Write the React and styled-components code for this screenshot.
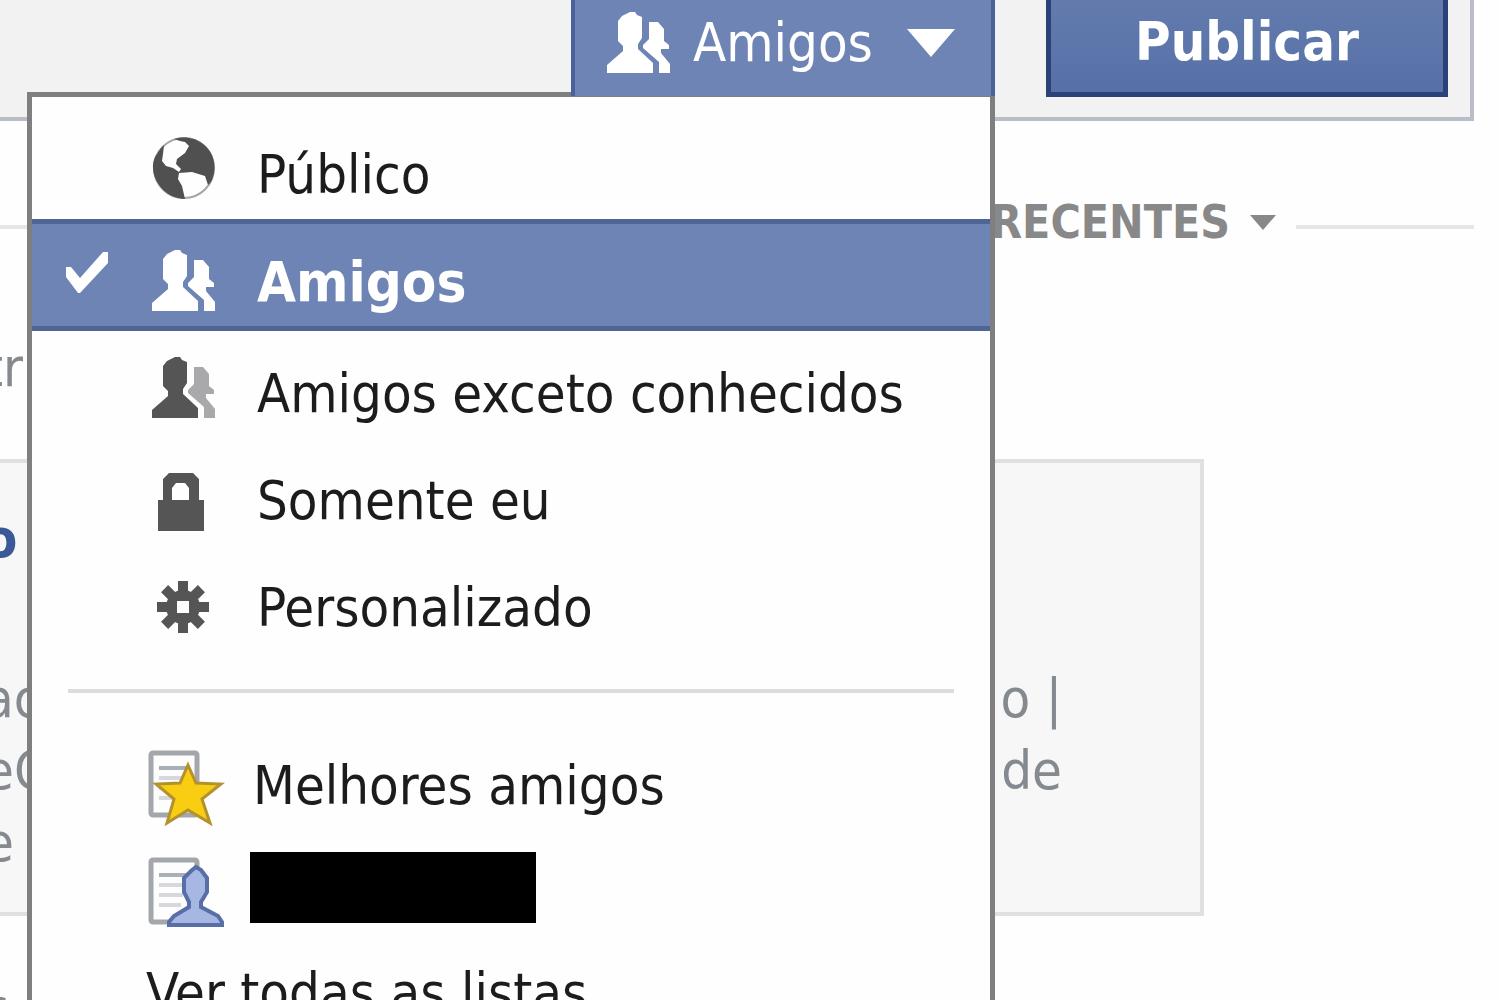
import React, { useState } from 'react';
import styled, { createGlobalStyle, css } from 'styled-components';

const GlobalStyle = createGlobalStyle`
  * {
    box-sizing: border-box;
  }

  body {
    margin: 0;
    background: #fefefe;
    overflow: hidden;
  }

  button {
    margin: 0;
    padding: 0;
    border: none;
    background: none;
    color: inherit;
    font: inherit;
    text-align: left;
    cursor: pointer;
  }
`;

const Page = styled.div`
  height: 100vh;
  overflow: hidden;
  color: #1c1c1c;
  font-family: 'DejaVu Sans Condensed', 'DejaVu Sans', Tahoma, sans-serif;
  font-stretch: condensed;
  font-size: 54px;
  line-height: 72px;
`;

const Composer = styled.div`
  display: flex;
  justify-content: flex-end;
  align-items: flex-start;
  gap: 51px;
  margin-right: 26px;
  padding: 0 22px 20px 0;
  background: #f2f2f2;
  border: solid #b9bdc8;
  border-width: 0 4px 4px 0;
`;

const Audience = styled.div`
  position: relative;
`;

const AudienceButton = styled.button`
  position: relative;
  z-index: 2;
  display: flex;
  align-items: center;
  width: 424px;
  height: 96px;
  padding: 0 36px 10px 32px;
  background: #6d84b4;
  border: solid #4a629b;
  border-width: 0 4px;
  color: #fff;

  span {
    flex: 1;
    padding-left: 22px;
  }
`;

const PublishButton = styled.button`
  width: 402px;
  height: 97px;
  padding-bottom: 8px;
  background: linear-gradient(#637bad, #5670a8);
  border: solid #2b4278;
  border-width: 0 5px 5px;
  color: #fff;
  font-weight: bold;
  text-align: center;
`;

const Menu = styled.div`
  position: absolute;
  top: 92px;
  right: 0;
  z-index: 1;
  width: 968px;
  padding-top: 15px;
  background: #fefefe;
  border: 5px solid #7f7f7f;
`;

const MenuItem = styled.button`
  display: grid;
  grid-template-columns: 120px 105px 1fr;
  align-items: center;
  width: 100%;
  height: 107px;
  padding-top: 7px;

  ${props => props.$selected && css`
    height: 112px;
    padding-top: 12px;
    background: #6d84b4;
    box-shadow: inset 0 5px #4f6593, inset 0 -5px #4f6593;
    color: #fff;
    font-size: 56px;
    font-weight: bold;
  `}
`;

const ListItem = styled(MenuItem)`
  grid-template-columns: 115px 103px 1fr;

  svg {
    margin-top: 16px;
  }
`;

const Label = styled.span`
  grid-column: 3;
  padding-top: ${props => (props.$selected ? '2px' : '12px')};
`;

const ListLabel = styled(Label)`
  padding-left: 3px;
`;

const Check = styled.svg`
  margin: 0 0 18px 32px;
`;

const Icon = styled.svg`
  grid-column: 2;
  display: block;
`;

const Divider = styled.hr`
  height: 4px;
  margin: 37px 36px 30px;
  border: none;
  background: #dcdcdc;
`;

const Redacted = styled.span`
  grid-column: 3;
  width: 286px;
  height: 71px;
  background: #000;
`;

const AllLists = styled.button`
  display: block;
  width: 100%;
  padding: 20px 0 20px 114px;
`;

const SortRow = styled.div`
  display: flex;
  align-items: center;
  gap: 20px;
  margin: 65px 26px 0 0;
  color: #888;
`;

const SortButton = styled.button`
  display: flex;
  align-items: center;
  gap: 20px;
  font-size: 46px;
  font-weight: bold;
`;

const Rule = styled.span`
  flex: ${props => (props.$short ? '0 0 178px' : '1')};
  height: 4px;
  margin-top: 10px;
  background: #e6e6e6;
`;

const Feed = styled.div`
  display: flex;
  flex-direction: column;
  margin-right: 296px;
  color: #858a90;
`;

const Line = styled.div`
  display: flex;
  justify-content: space-between;
  padding-right: 138px;
  margin-left: -16px;
`;

const Before = styled.div`
  padding: 74px 0 55px;
`;

const Story = styled.div`
  height: 457px;
  padding-top: 40px;
  background: #f7f7f7;
  border: solid #e0e0e0;
  border-width: 4px 4px 4px 0;
`;

const Author = styled(Line)`
  color: #3b5998;
  font-weight: bold;
`;

const Summary = styled.div`
  padding-top: 16px;
`;

const After = styled.div`
  padding-top: 56px;
`;

function FriendsIcon({ front = '#fff', back = '#fff' }) {
  return (
    <Icon width="64" height="64" viewBox="0 0 64 64" aria-hidden="true">
      <path
        fill={front}
        d="M15 5l8-4h5l2 3 5 2v21l-4 6v5l15 14v10H0V54l16-14v-5l-5-5V10z"
      />
      <path
        fill={back}
        d="M42 11h9l6 7v12l5 4v4h-8v4l9 11v9H52V51L36 37v-3l6-6z"
      />
    </Icon>
  );
}

function GlobeIcon() {
  return (
    <Icon width="64" height="64" viewBox="0 0 64 64" aria-hidden="true">
      <circle cx="32" cy="31" r="30" fill="#fefefe" stroke="#a5a5a5" strokeWidth="2" />
      <path
        fill="#505050"
        d="M22 2C30-1 43 0 51 7c9 7 13 18 11 29-1 5-3 10-6 12l-3-9-13-4-13 1-1 6 4 7 3 13c-9 0-20-5-26-14C1 40-1 29 3 20l6-9 3-3-1 9-1 7 4 5 7 2 6 4 2-3-5-5 1-5 8-6 4-7-4-4-5-1z"
      />
    </Icon>
  );
}

function LockIcon() {
  return (
    <Icon width="64" height="72" viewBox="0 -4 64 72" aria-hidden="true">
      <path
        fill="#555"
        fillRule="evenodd"
        d="M6 68V37h5V16l6-6h24l6 6v21h5v31zM20 37h17V25l-4-5h-9l-4 5z"
      />
    </Icon>
  );
}

function GearIcon() {
  return (
    <Icon width="64" height="64" viewBox="0 0 64 64" aria-hidden="true">
      <g fill="#555" transform="translate(31 37)">
        {[0, 45, 90, 135].map(angle => (
          <rect key={angle} x="-5" y="-26" width="10" height="52" transform={`rotate(${angle})`} />
        ))}
        <circle r="17" />
        <rect x="-6" y="-6" width="12" height="12" fill="#fefefe" />
      </g>
    </Icon>
  );
}

function Sheet() {
  return (
    <>
      <rect x="4" y="3" width="46" height="62" rx="2" fill="#fdfdfd" stroke="#a3a6ab" strokeWidth="5" />
      <path d="M12 28h26M12 38h24M12 48h22" stroke="#d6d8de" strokeWidth="4" />
      <path d="M12 18h28" stroke="#a9aeb9" strokeWidth="4" />
    </>
  );
}

function StarListIcon() {
  return (
    <Icon width="78" height="76" viewBox="0 0 78 76" aria-hidden="true">
      <Sheet />
      <path
        fill="#f8cd12"
        stroke="#b3922e"
        strokeWidth="3"
        d="M41 15l8 18 25 1-19 15 8 24-22-13-21 13 7-24-18-15 24-1z"
      />
    </Icon>
  );
}

function PersonListIcon() {
  return (
    <Icon width="78" height="76" viewBox="0 0 78 76" aria-hidden="true">
      <Sheet />
      <path
        fill="#a5b7e2"
        stroke="#586ea6"
        strokeWidth="4"
        d="M49 10l5 3 6 8v14l-6 10v5l17 9 4 6v3H22v-3l5-6 15-9v-5l-5-10V21l7-7z"
      />
    </Icon>
  );
}

const AUDIENCES = [
  { name: 'Público', icon: <GlobeIcon /> },
  { name: 'Amigos', icon: <FriendsIcon /> },
  { name: 'Amigos exceto conhecidos', icon: <FriendsIcon front="#555" back="#a9a9ab" /> },
  { name: 'Somente eu', icon: <LockIcon /> },
  { name: 'Personalizado', icon: <GearIcon /> },
];

function AudienceMenu({ selected, onSelect }) {
  return (
    <Menu role="menu">
      {AUDIENCES.map(({ name, icon }) => {
        const isSelected = name === selected;
        return (
          <MenuItem
            key={name}
            role="menuitemradio"
            aria-checked={isSelected}
            $selected={isSelected}
            onClick={() => onSelect(name)}
          >
            {isSelected && (
              <Check width="46" height="44" viewBox="0 0 46 44" aria-hidden="true">
                <path fill="#fff" d="M2 17h5l9 11L39 2h5v11L16 43h-2L2 27z" />
              </Check>
            )}
            {icon}
            <Label $selected={isSelected}>{name}</Label>
          </MenuItem>
        );
      })}
      <Divider />
      <ListItem role="menuitem">
        <StarListIcon />
        <ListLabel>Melhores amigos</ListLabel>
      </ListItem>
      <ListItem role="menuitem" aria-label="Lista">
        <PersonListIcon />
        <Redacted />
      </ListItem>
      <AllLists role="menuitem">Ver todas as listas</AllLists>
    </Menu>
  );
}

function App() {
  const [audience, setAudience] = useState('Amigos');
  const [open, setOpen] = useState(true);

  return (
    <Page>
      <GlobalStyle />
      <Composer>
        <Audience>
          <AudienceButton aria-haspopup="menu" aria-expanded={open} onClick={() => setOpen(!open)}>
            <FriendsIcon />
            <span>{audience}</span>
            <svg width="48" height="28" viewBox="0 0 48 28" aria-hidden="true">
              <path fill="#fff" d="M0 0h48L24 28z" />
            </svg>
          </AudienceButton>
          {open && <AudienceMenu selected={audience} onSelect={setAudience} />}
        </Audience>
        <PublishButton>Publicar</PublishButton>
      </Composer>

      <SortRow>
        <Rule />
        <SortButton>
          RECENTES
          <svg width="26" height="15" viewBox="0 0 26 15" aria-hidden="true">
            <path fill="#888" d="M0 0h26L13 15z" />
          </svg>
        </SortButton>
        <Rule $short />
      </SortRow>

      <Feed>
        <Before>
          <Line>tr</Line>
        </Before>
        <Story>
          <Author>o</Author>
          <Line>-</Line>
          <Summary>
            <Line>
              <span>ac</span>
              <span>o |</span>
            </Line>
            <Line>
              <span>eC</span>
              <span>de</span>
            </Line>
            <Line>e</Line>
          </Summary>
        </Story>
        <After>
          <Line>s</Line>
        </After>
      </Feed>
    </Page>
  );
}

export default App;
